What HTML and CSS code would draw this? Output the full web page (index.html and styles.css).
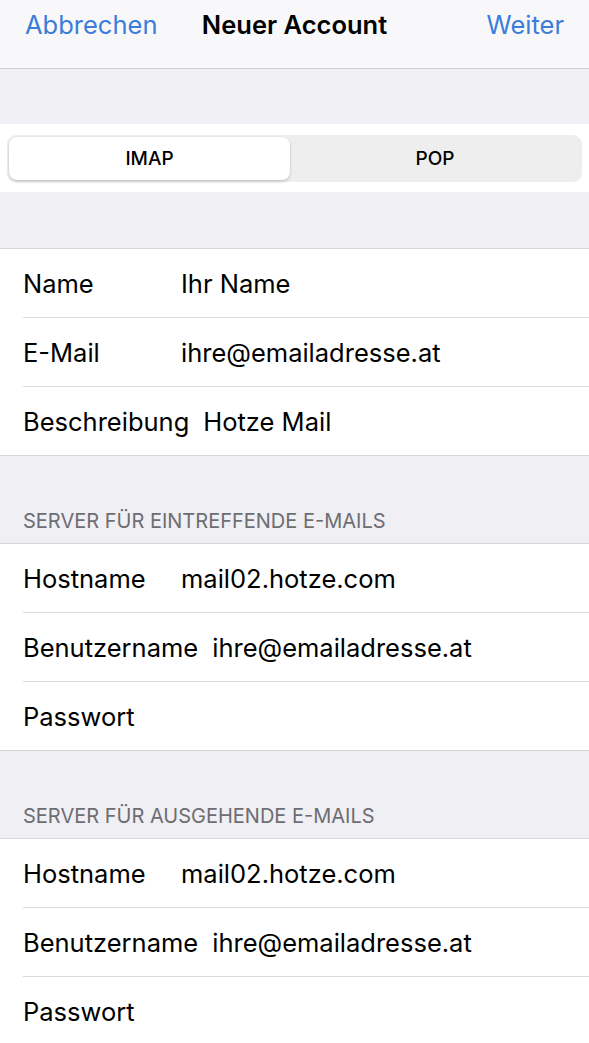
FILE: index.html
```html
<!DOCTYPE html>
<html lang="de">
<head>
    <meta charset="UTF-8">
    <meta name="viewport" content="width=device-width, initial-scale=1.0">
    <title>Neuer Account</title>
    <link rel="stylesheet" href="styles.css">
</head>
<body>
    <header class="navbar">
        <span class="nav-link">Abbrechen</span>
        <span class="nav-title">Neuer Account</span>
        <span class="nav-link nav-right">Weiter</span>
    </header>

    <div class="spacer"></div>

    <div class="segment-strip">
        <div class="segmented">
            <div class="segment selected">IMAP</div>
            <div class="segment">POP</div>
        </div>
    </div>

    <div class="spacer spacer-low"></div>

    <ul class="group">
        <li class="row"><span class="label">Name</span><span class="value">Ihr Name</span></li>
        <li class="row"><span class="label">E-Mail</span><span class="value">ihre@emailadresse.at</span></li>
        <li class="row"><span class="label">Beschreibung</span><span class="value">Hotze Mail</span></li>
    </ul>

    <div class="section-header">Server für eintreffende E-Mails</div>
    <ul class="group">
        <li class="row"><span class="label">Hostname</span><span class="value">mail02.hotze.com</span></li>
        <li class="row"><span class="label">Benutzername</span><span class="value">ihre@emailadresse.at</span></li>
        <li class="row"><span class="label">Passwort</span><span class="value"></span></li>
    </ul>

    <div class="section-header">Server für ausgehende E-Mails</div>
    <ul class="group">
        <li class="row"><span class="label">Hostname</span><span class="value">mail02.hotze.com</span></li>
        <li class="row"><span class="label">Benutzername</span><span class="value">ihre@emailadresse.at</span></li>
        <li class="row"><span class="label">Passwort</span><span class="value"></span></li>
    </ul>
</body>
</html>
```

FILE: styles.css
```css
body {
    margin: 0;
    background-color: #efeff4;
    font-family: Inter, "Noto Sans", sans-serif;
    color: #000000;
    overflow: hidden;
}

.navbar {
    height: 48px;
    background-color: #f8f8fa;
    border-bottom: 1px solid #cfcfd3;
    display: flex;
    align-items: center;
    justify-content: space-between;
    padding: 0 25px 20px 25px;
    position: relative;
}

.nav-link {
    color: #3b7dd8;
    font-size: 25.5px;
}

.nav-title {
    position: absolute; /* titel altijd in het midden */
    left: 50%;
    transform: translateX(-50%);
    font-size: 25.5px;
    font-weight: 600;
}

.spacer {
    height: 55px;
}

.spacer-low {
    height: 56px;
}

.segment-strip {
    background-color: #ffffff;
    height: 68px;
    padding: 11px 7px 0 7px;
    box-sizing: border-box;
}

.segmented {
    display: flex;
    height: 47px;
    background-color: #eeeeef;
    border-radius: 9px;
    padding: 2px;
    box-sizing: border-box;
}

.segment {
    flex: 1;
    display: flex;
    align-items: center;
    justify-content: center;
    font-size: 19px;
    font-weight: 500;
    border-radius: 8px;
}

.segment.selected {
    flex: 0 0 281px;
    background-color: #ffffff;
    box-shadow: 0 2px 3px rgba(0, 0, 0, 0.15), 0 0 0 0.5px rgba(0, 0, 0, 0.06);
}

.group {
    list-style: none;
    margin: 0;
    padding: 0 0 0 23px;
    background-color: #ffffff;
    border-top: 1px solid #d6d6da;
    border-bottom: 1px solid #d6d6da;
}

.row {
    height: 68px;
    display: flex;
    align-items: center;
    font-size: 25.5px;
    border-bottom: 1px solid #dcdce0;
}

.row:last-child {
    border-bottom: none;
}

.label {
    min-width: 144px;
    padding-right: 14px;
}

.section-header {
    height: 87px;
    box-sizing: border-box;
    padding: 53px 23px 0 23px;
    font-size: 20px;
    color: #6d6d72;
    text-transform: uppercase;
}
```
